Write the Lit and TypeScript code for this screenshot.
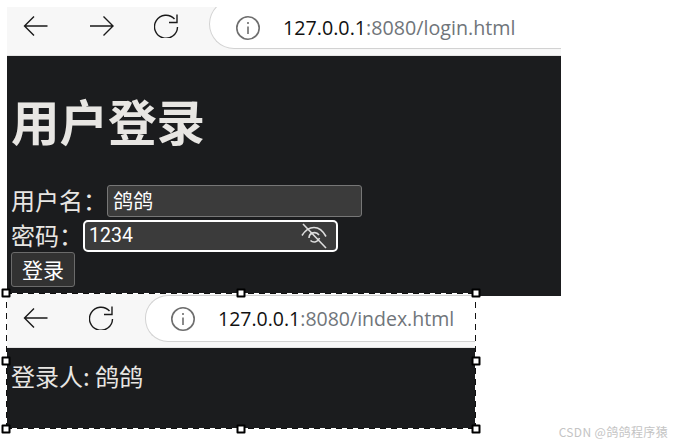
import { LitElement, html, css, svg } from "lit";
import { customElement, property } from "lit/decorators.js";

const back = svg`<path d="M25.5 12H3M12 2.5 2.5 12 12 21.5" fill="none" stroke="#1a1a1a" stroke-width="1.4"/>`;
const fwd = svg`<path d="M2 12H24.5M15.5 2.5 25 12 15.5 21.5" fill="none" stroke="#1a1a1a" stroke-width="1.4"/>`;
const reload = svg`<path d="M20.5 5A11.5 11.5 0 1 0 23.5 13M23 .5V8.5H15" fill="none" stroke="#1a1a1a" stroke-width="1.4"/>`;

@customElement("browser-bar")
class BrowserBar extends LitElement {
  @property() path = "";
  @property({ type: Boolean }) forward = false;
  @property({ type: Boolean, reflect: true }) tall = false;
  static styles = css`
    :host { display: flex; align-items: flex-start; height: 49px; background: #f7f7f7; box-sizing: border-box; overflow: hidden; border-bottom: 1px solid #e4e4e4; }
    :host([tall]) { height: 54px; }
    .nav { display: flex; align-items: center; height: 37px; padding: 0 0 0 15px; flex: none; }
    :host([tall]) .nav { height: 47px; }
    .nav svg { width: 28px; height: 24px; display: block; flex: none; margin-right: 38px; }
    :host([tall]) .nav svg { margin-right: 39px; }
    .nav svg:last-child, :host([tall]) .nav svg:last-child { margin-right: 0; }
    .addr { flex: 1; min-width: 0; height: 50px; margin: -8px 0 0 27px; background: #fff; border: 1.5px solid #d2d2d2; border-right: 0;
      border-radius: 25px 0 0 25px; display: flex; align-items: center; padding: 7px 0 0 25px; box-sizing: border-box; white-space: nowrap;
      font: 19.7px "Open Sans", "Liberation Sans", sans-serif; color: #111; }
    :host([tall]) .addr { height: 47px; margin: 1px 0 0 28px; padding: 0 0 0 24px; border-radius: 23px 0 0 23px; font-size: 19.5px; }
    .addr svg { width: 26px; height: 26px; flex: none; margin-right: 22px; }
    .port { color: #70757a; }
  `;
  render() {
    return html`<div class="nav">
        <svg viewBox="0 0 28 24">${back}</svg>
        ${this.forward ? html`<svg viewBox="0 0 28 24">${fwd}</svg>` : ""}
        <svg viewBox="0 0 28 24">${reload}</svg>
      </div>
      <div class="addr">
        <svg viewBox="0 0 26 26"><circle cx="13" cy="13" r="11.2" fill="none" stroke="#6e6e6e" stroke-width="1.6"/><path d="M13 11.5V19M13 7V9" stroke="#6e6e6e" stroke-width="1.6"/></svg>
        <span>127.0.0.1<span class="port">:8080/${this.path}</span></span>
      </div>`;
  }
}

@customElement("app-root")
class AppRoot extends LitElement {
  static styles = css`
    :host { display: block; width: 676px; height: 446px; background: #fff; position: relative; overflow: hidden;
      font-family: "Noto Sans CJK SC", "Open Sans", sans-serif; color: #e8e6e3; }
    .wrap { padding: 7px 0 0 7px; }
    .login { width: 554px; height: 289px; }
    .page { background: #1b1c1e; }
    .login .page { height: 240px; padding: 32px 0 0 4px; box-sizing: border-box; }
    h1 { margin: 0; font-size: 48.5px; line-height: 64px; font-weight: 700; height: 97px; }
    .row { display: flex; align-items: center; font-size: 24px; line-height: 32px; height: 32px; }
    .row > span { margin-top: -3px; }
    .row + .row { margin-top: 3px; }
    .input { width: 255px; height: 32px; box-sizing: border-box; background: #3b3b3b; border: 1px solid #777; border-radius: 3px; display: flex; align-items: center;
      padding: 0 5px; font-size: 20px; color: #fff; justify-content: space-between; }
    .focus { border: 2.5px solid #fff; border-radius: 5px; padding: 0 8px 2px 4px; font: 19.5px Roboto, sans-serif; }
    .focus svg { width: 28px; height: 26px; display: block; margin-top: 2px; }
    button { display: block; width: 64px; height: 35px; padding: 0 0 2px; background: #323232; border: 1px solid #6b6b6b; border-radius: 3px; color: #fff; font: 21px "Noto Sans CJK SC", sans-serif; }
    .index { width: 469px; height: 135px; margin-top: -2px; }
    .index .page { height: 81px; padding: 11px 0 0 4px; box-sizing: border-box; font-size: 24px; line-height: 34px; }
    .sel { position: absolute; left: 6px; top: 293px; width: 470px; height: 136px; pointer-events: none;
      background:
        repeating-linear-gradient(90deg, #111 0 6px, #fff 6px 11px) left top / 100% 1px no-repeat,
        repeating-linear-gradient(90deg, #111 0 6px, #fff 6px 11px) left bottom / 100% 1px no-repeat,
        repeating-linear-gradient(0deg, #111 0 6px, #fff 6px 11px) left top / 1px 100% no-repeat,
        repeating-linear-gradient(0deg, #111 0 6px, #fff 6px 11px) right top / 1px 100% no-repeat; }
    .h { position: absolute; width: 5px; height: 5px; background: #fff; border: 2px solid #000; border-radius: 1px; transform: translate(-50%, -50%); }
    .wm { position: absolute; right: 8px; bottom: 6px; font: 12px "Noto Sans CJK SC", sans-serif; color: #c4c4c4; letter-spacing: .35px; }
  `;
  render() {
    const hs = [[0,0],[50,0],[100,0],[0,50],[100,50],[0,100],[50,100],[100,100]];
    return html`<div class="wrap">
        <div class="login">
          <browser-bar forward path="login.html"></browser-bar>
          <div class="page">
            <h1>用户登录</h1>
            <div class="row"><span>用户名：</span><div class="input">鸽鸽</div></div>
            <div class="row"><span>密码：</span><div class="input focus">1234
              <svg viewBox="0 0 28 26"><path d="M2 12.5C6 6 11 4.5 14 4.5S22 6 26 13.5M9 15a5.5 5.5 0 0 1 10-3M19.5 15a5.5 5.5 0 0 1-9 2.5" fill="none" stroke="#ddd" stroke-width="1.6"/><path d="M3 1 26 25" stroke="#ddd" stroke-width="1.6"/></svg>
            </div></div>
            <button>登录</button>
          </div>
        </div>
        <div class="index">
          <browser-bar tall path="index.html"></browser-bar>
          <div class="page">登录人: 鸽鸽</div>
        </div>
      </div>
      <div class="sel">${hs.map(([x, y]) => html`<div class="h" style="left:${x}%;top:${y}%"></div>`)}</div>
      <div class="wm">CSDN @鸽鸽程序猿</div>`;
  }
}
